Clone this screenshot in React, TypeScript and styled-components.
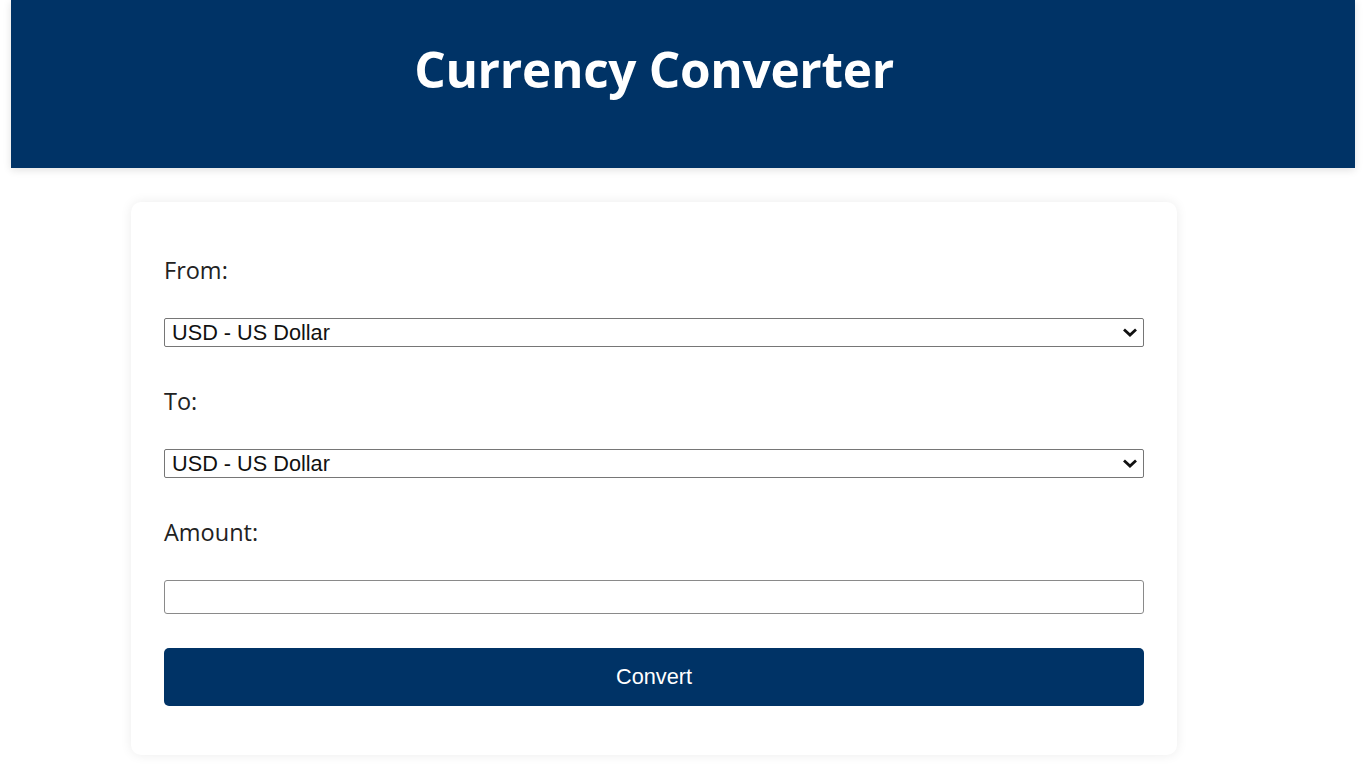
import styled, { createGlobalStyle } from 'styled-components';

const GlobalStyle = createGlobalStyle`
    body {
        margin: 0;
        background: #fff;
        font-family: 'Open Sans', 'Noto Sans', sans-serif;
    }
`

const Page = styled.div`
    display: flex;
    flex-direction: column;
    padding: 0 11px;
`

const Header = styled.header`
    height: 168px;
    background: #003366;
    box-shadow: 0 2px 8px rgba(0, 0, 0, 0.12);
    display: flex;
    align-items: flex-start;
    padding-left: 120px;
`

const Title = styled.h1`
    width: 1046px;
    margin: 37px 0 0;
    text-align: center;
    color: #fff;
    font-size: 49.5px;
    font-weight: 700;
    line-height: 64px;
    letter-spacing: -0.3px;
`

const Card = styled.main`
    width: 1046px;
    box-sizing: border-box;
    margin: 34px 0 14px 120px;
    padding: 20px 33px 49px;
    background: #fff;
    border-radius: 10px;
    box-shadow: 0 0 12px rgba(0, 0, 0, 0.08);
    display: flex;
    flex-direction: column;
`

const Label = styled.label`
    display: block;
    margin: 33px 0 33px;
    font-size: 23.5px;
    line-height: 30px;
    color: #222;
`

const SelectWrap = styled.div`
    position: relative;
    margin-bottom: 6px;
`

const Select = styled.select`
    width: 100%;
    height: 29px;
    box-sizing: border-box;
    appearance: none;
    padding: 0 30px 0 7px;
    border: 1px solid #767676;
    border-radius: 2px;
    background: #fff;
    color: #111;
    font-family: 'Liberation Sans', Arial, sans-serif;
    font-size: 21.7px;
    line-height: 27px;
`

const Chevron = styled.svg`
    position: absolute;
    right: 6px;
    top: 9px;
    pointer-events: none;
`

const Input = styled.input`
    width: 100%;
    height: 34px;
    box-sizing: border-box;
    margin: 0 0 34px;
    padding: 0 8px;
    border: 1px solid #8a8a8a;
    border-radius: 3px;
    font-family: 'Liberation Sans', Arial, sans-serif;
    font-size: 20px;
`

const Button = styled.button`
    width: 100%;
    height: 58px;
    border: none;
    border-radius: 5px;
    background: #003366;
    color: #fff;
    font-family: 'Liberation Sans', Arial, sans-serif;
    font-size: 21.7px;
    cursor: pointer;
`

const currencies = ['USD - US Dollar', 'EUR - Euro', 'GBP - British Pound', 'JPY - Japanese Yen']

const CurrencySelect = ({ id }: { id: string }) => (
    <SelectWrap>
        <Select id={id} defaultValue="USD - US Dollar">
            {currencies.map((c) => <option key={c}>{c}</option>)}
        </Select>
        <Chevron width="16" height="11" viewBox="0 0 16 11">
            <path d="M2 2.5 L8 8 L14 2.5" fill="none" stroke="#111" strokeWidth="2.8" />
        </Chevron>
    </SelectWrap>
)

export default function App() {
    return (
        <Page>
            <GlobalStyle />
            <Header>
                <Title>Currency Converter</Title>
            </Header>
            <Card>
                <Label htmlFor="from">From:</Label>
                <CurrencySelect id="from" />
                <Label htmlFor="to">To:</Label>
                <CurrencySelect id="to" />
                <Label htmlFor="amount">Amount:</Label>
                <Input id="amount" type="number" />
                <Button>Convert</Button>
            </Card>
        </Page>
    )
}
